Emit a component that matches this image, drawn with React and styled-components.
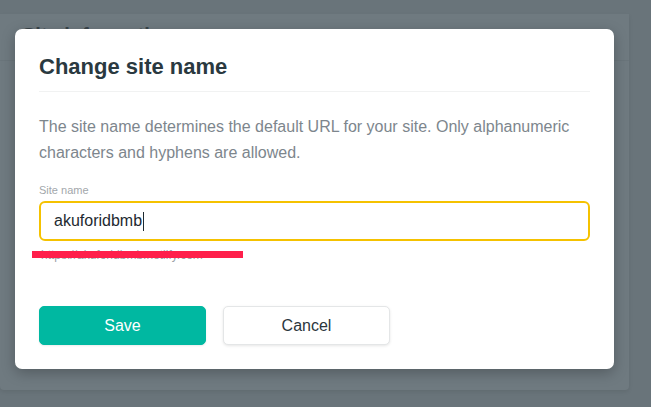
import React from "react";
import styled, { createGlobalStyle } from "styled-components";

const GlobalStyle = createGlobalStyle`
	body {
		margin: 0;
		background: #69747a;
		font-family: "Liberation Sans", Arial, sans-serif;
	}
`;

const Page = styled.div`
	position: relative;
	width: 651px;
	height: 407px;
	overflow: hidden;
	background: #69747a;
`;

const BackCard = styled.div`
	margin-top: 14px;
	width: 629px;
	height: 376px;
	background: #6f7a80;
	border-radius: 0 0 4px 4px;
	box-shadow: 0 2px 4px rgba(0, 0, 0, 0.08);
`;

const BackTitle = styled.div`
	padding: 10px 22px 0;
	height: 36px;
	border-bottom: 1px solid #6a757b;
	font-size: 20px;
	font-weight: 700;
	color: #39444a;
`;

const Overlay = styled.div`
	position: absolute;
	inset: 0;
`;

const Modal = styled.div`
	position: absolute;
	left: 15px;
	top: 29px;
	width: 599px;
	box-sizing: border-box;
	padding: 24px 24px 24px;
	background: #ffffff;
	border-radius: 7px;
	box-shadow: 0 4px 14px rgba(0, 0, 0, 0.25);
`;

const Title = styled.h2`
	margin: 0;
	line-height: 28px;
	font-size: 22px;
	font-weight: 700;
	color: #2a3940;
	padding-bottom: 10px;
	border-bottom: 1px solid #f1f2f2;
`;

const Description = styled.p`
	margin: 22px 0 0;
	font-size: 16px;
	line-height: 26px;
	color: #7d868d;
`;

const Label = styled.div`
	margin-top: 17px;
	font-size: 11px;
	line-height: 14px;
	color: #a2a7ab;
`;

const Field = styled.div`
	margin-top: 4px;
	height: 40px;
	box-sizing: border-box;
	border: 2px solid #f5c200;
	border-radius: 6px;
	padding: 0 13px;
	display: flex;
	align-items: center;
	font-size: 16px;
	color: #1e2a30;
`;

const Caret = styled.span`
	display: inline-block;
	width: 1px;
	height: 19px;
	margin-left: 1px;
	background: #1e2a30;
`;

const Helper = styled.div`
	position: relative;
	margin-top: 6px;
	padding-left: 2px;
	font-size: 12px;
	line-height: 16px;
	color: #9aa1a6;
`;

const Redact = styled.span`
	position: absolute;
	left: -7px;
	top: 4px;
	width: 211px;
	height: 7px;
	background: #ff1f4b;
`;

const Actions = styled.div`
	margin-top: 43px;
	display: flex;
	gap: 17px;
`;

const Button = styled.button`
	width: 167px;
	height: 39px;
	box-sizing: border-box;
	border-radius: 5px;
	font-family: "Liberation Sans", Arial, sans-serif;
	font-size: 16px;
	cursor: pointer;
	border: 1px solid ${(p) => (p.$primary ? "#00b8a1" : "#e4e6e7")};
	background: ${(p) => (p.$primary ? "#00b8a1" : "#ffffff")};
	color: ${(p) => (p.$primary ? "#ffffff" : "#2b363c")};
	box-shadow: ${(p) =>
		p.$primary ? "0 1px 2px rgba(0,0,0,0.08)" : "0 1px 3px rgba(0,0,0,0.1)"};
`;

const App = () => {
	return (
		<>
			<GlobalStyle />
			<Page>
				<BackCard>
					<BackTitle>Site information</BackTitle>
				</BackCard>
				<Overlay>
					<Modal>
						<Title>Change site name</Title>
						<Description>
							The site name determines the default URL for your site. Only
							alphanumeric characters and hyphens are allowed.
						</Description>
						<Label>Site name</Label>
						<Field>
							akuforidbmb
							<Caret />
						</Field>
						<Helper>
							https://akuforidbmb.netlify.com
							<Redact />
						</Helper>
						<Actions>
							<Button $primary>Save</Button>
							<Button>Cancel</Button>
						</Actions>
					</Modal>
				</Overlay>
			</Page>
		</>
	);
};

export default App;
